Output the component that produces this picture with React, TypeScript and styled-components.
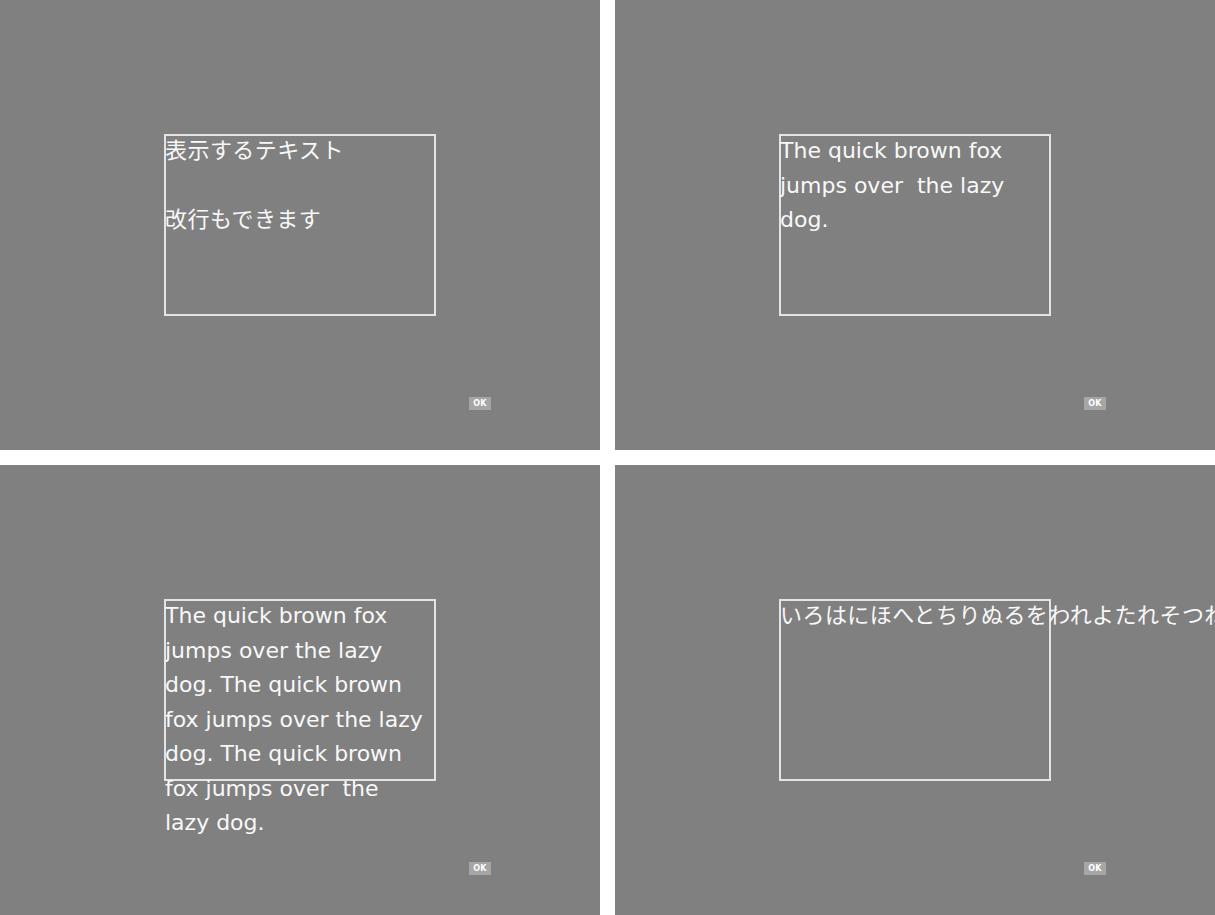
import React from "react";
import styled, { createGlobalStyle } from "styled-components";

const GlobalStyle = createGlobalStyle`
  html, body {
    margin: 0;
    padding: 0;
    background: #ffffff;
  }
`;

const Grid = styled.div`
  display: grid;
  grid-template-columns: 600px 600px;
  grid-auto-rows: 450px;
  gap: 15px;
  width: 1215px;
`;

const Stage = styled.div`
  position: relative;
  overflow: hidden;
  background: #808080;
  display: flex;
  flex-direction: column;
  align-items: flex-start;
  padding: 134px 0 0 164px;
  box-sizing: border-box;
`;

const Frame = styled.div`
  position: relative;
  width: 272px;
  height: 182px;
  box-sizing: border-box;
  border: 2px solid #e4e4e4;
`;

// text is drawn over the frame, starting at its outer corner
const Message = styled.div<{ $wrap: boolean; $cjk: boolean }>`
  position: absolute;
  top: -2px;
  left: -1px;
  width: 262px;
  font-family: "DejaVu Sans", "Noto Sans CJK JP", sans-serif;
  font-size: 22px;
  line-height: 34.5px;
  letter-spacing: ${(p) => (p.$cjk ? "0.45px" : "0")};
  color: #f8f8f8;
  white-space: ${(p) => (p.$wrap ? "pre-wrap" : "pre")};
`;

const OkButton = styled.button`
  margin: 81px 0 0 305px;
  width: 22px;
  height: 13px;
  padding: 0;
  border: none;
  background: #a6a6a6;
  color: #ffffff;
  font-family: "DejaVu Sans", sans-serif;
  font-weight: bold;
  font-size: 8px;
  line-height: 13px;
  letter-spacing: 0.3px;
`;

type Scene = { text: string; wrap: boolean; cjk: boolean };

const scenes: Scene[] = [
  { text: "表示するテキスト\n\n改行もできます", wrap: true, cjk: true },
  { text: "The quick brown fox jumps over  the lazy dog.", wrap: true, cjk: false },
  {
    text:
      "The quick brown fox jumps over the lazy dog. The quick brown fox jumps over the lazy dog. The quick brown fox jumps over  the lazy dog.",
    wrap: true,
    cjk: false,
  },
  { text: "いろはにほへとちりぬるをわれよたれそつねならむ", wrap: false, cjk: true },
];

export default function App() {
  return (
    <>
      <GlobalStyle />
      <Grid>
        {scenes.map((s, i) => (
          <Stage key={i}>
            <Frame>
              <Message $wrap={s.wrap} $cjk={s.cjk}>
                {s.text}
              </Message>
            </Frame>
            <OkButton>OK</OkButton>
          </Stage>
        ))}
      </Grid>
    </>
  );
}
